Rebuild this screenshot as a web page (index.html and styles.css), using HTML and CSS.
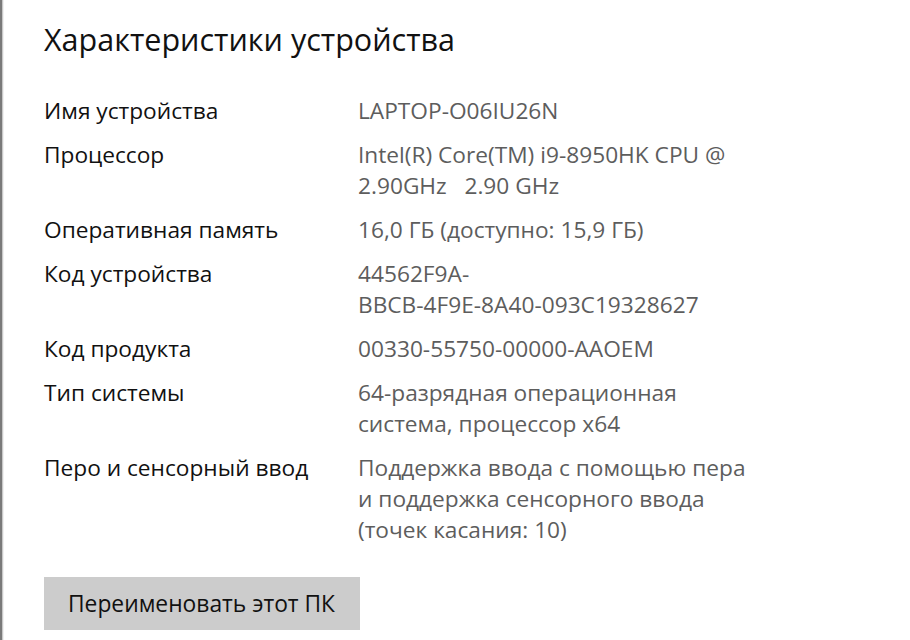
FILE: index.html
```html
<!DOCTYPE html>
<html lang="ru">
<head>
    <meta charset="UTF-8">
    <title>Характеристики устройства</title>
    <link rel="stylesheet" href="styles.css">
</head>
<body>
    <div class="page">
        <h1 class="title">Характеристики устройства</h1>

        <div class="specs">
            <div class="label">Имя устройства</div>
            <div class="value">LAPTOP-O06IU26N</div>

            <div class="label">Процессор</div>
            <div class="value">Intel(R) Core(TM) i9-8950HK CPU @ 2.90GHz&nbsp;&nbsp;&nbsp;2.90 GHz</div>

            <div class="label">Оперативная память</div>
            <div class="value">16,0 ГБ (доступно: 15,9 ГБ)</div>

            <div class="label">Код устройства</div>
            <div class="value">44562F9A-<br>BBCB-4F9E-8A40-093C19328627</div>

            <div class="label">Код продукта</div>
            <div class="value">00330-55750-00000-AAOEM</div>

            <div class="label">Тип системы</div>
            <div class="value">64-разрядная операционная система, процессор x64</div>

            <div class="label">Перо и сенсорный ввод</div>
            <div class="value">Поддержка ввода с помощью пера и поддержка сенсорного ввода (точек касания: 10)</div>
        </div>

        <button class="rename-btn">Переименовать этот ПК</button>
    </div>
</body>
</html>
```

FILE: styles.css
```css
html, body {
    margin: 0;
    padding: 0;
    background: #fff;
}
body {
    font-family: "Open Sans", "Noto Sans", sans-serif;
    color: #000;
}
.page {
    min-height: 640px;
    box-sizing: border-box;
    border-left: 2px solid #7a7a7a;
    box-shadow: inset 1px 0 0 #c8c8c8, inset 2px 0 0 #f0f0f0;
    padding: 19px 0 0 42px;
}
.title {
    margin: 0;
    font-size: 30.5px;
    line-height: 40px;
    font-weight: 400;
    color: #111;
}
.specs {
    display: grid;
    grid-template-columns: 314px 405px;
    row-gap: 13px;
    margin-top: 36px;
    font-size: 22.7px;
    line-height: 31px;
}
.label {
    color: #111;
}
.value {
    color: #5d5d5d;
}
.rename-btn {
    display: block;
    margin-top: 32px;
    height: 53px;
    padding: 0 25px 0 24px;
    border: none;
    background: #cccccc;
    font-family: inherit;
    font-size: 22.8px;
    line-height: 53px;
    color: #111;
}
```
